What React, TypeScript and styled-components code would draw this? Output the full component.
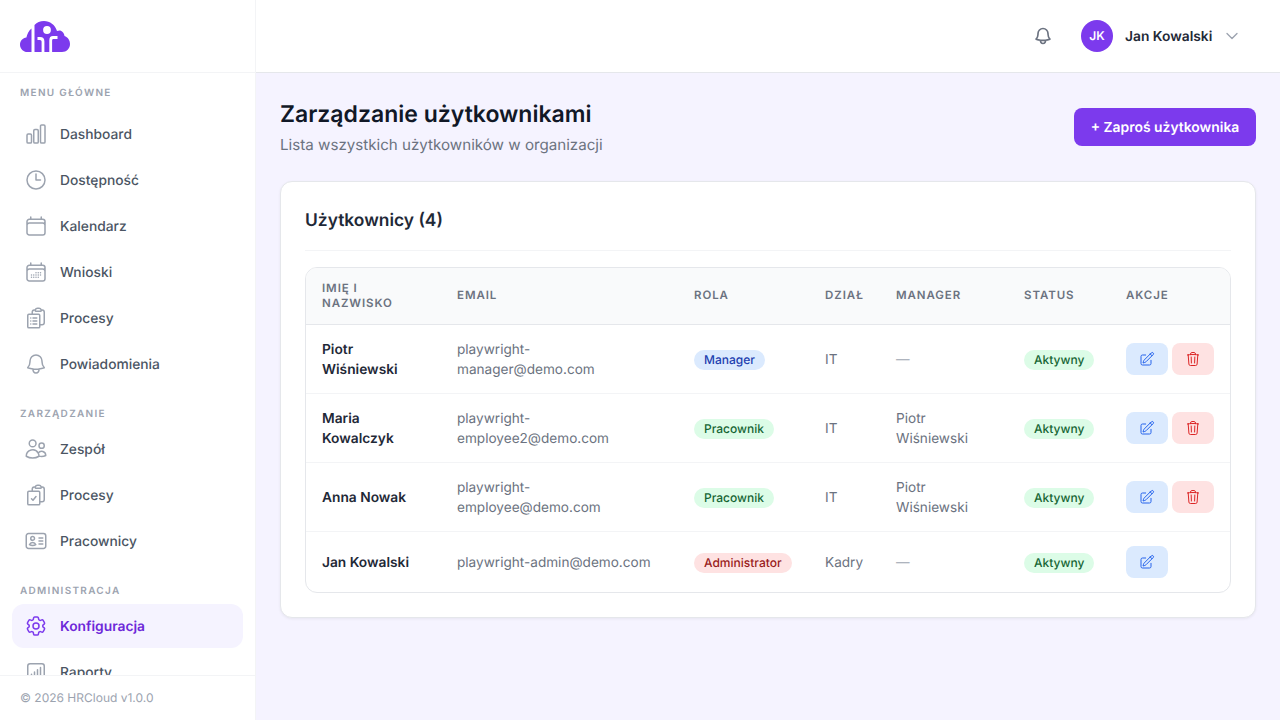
import React, { FC, ReactNode } from 'react';
import styled, { createGlobalStyle } from 'styled-components';
import {
  HiOutlineBell,
  HiOutlineCalendar,
  HiOutlineCalendarDays,
  HiOutlineChartBar,
  HiOutlineChartBarSquare,
  HiOutlineChevronDown,
  HiOutlineClipboardDocumentCheck,
  HiOutlineClipboardDocumentList,
  HiOutlineClock,
  HiOutlineCog6Tooth,
  HiOutlineIdentification,
  HiOutlinePencilSquare,
  HiOutlineTrash,
  HiOutlineUsers,
} from 'react-icons/hi2';

type RoleKind = 'manager' | 'employee' | 'admin';

interface IUser {
  name: string;
  email: string;
  role: string;
  kind: RoleKind;
  dept: string;
  manager: string;
  canDelete: boolean;
}

const USERS: IUser[] = [
  { name: 'Piotr Wiśniewski', email: 'playwright-manager@demo.com', role: 'Manager', kind: 'manager', dept: 'IT', manager: '—', canDelete: true },
  { name: 'Maria Kowalczyk', email: 'playwright-employee2@demo.com', role: 'Pracownik', kind: 'employee', dept: 'IT', manager: 'Piotr Wiśniewski', canDelete: true },
  { name: 'Anna Nowak', email: 'playwright-employee@demo.com', role: 'Pracownik', kind: 'employee', dept: 'IT', manager: 'Piotr Wiśniewski', canDelete: true },
  { name: 'Jan Kowalski', email: 'playwright-admin@demo.com', role: 'Administrator', kind: 'admin', dept: 'Kadry', manager: '—', canDelete: false },
];

const COLUMNS = [
  { title: 'Imię i nazwisko', width: 135 },
  { title: 'Email', width: 237 },
  { title: 'Rola', width: 131 },
  { title: 'Dział', width: 71 },
  { title: 'Manager', width: 128 },
  { title: 'Status', width: 102 },
  { title: 'Akcje', width: 120 },
];

const BADGE_COLORS = {
  manager: { bg: '#dbeafe', fg: '#1e40af' },
  employee: { bg: '#dcfce7', fg: '#166534' },
  admin: { bg: '#fee2e2', fg: '#991b1b' },
};

const GlobalStyle = createGlobalStyle`
  html, body {
    margin: 0;
    height: 100%;
    overflow: hidden;
  }
  body {
    font-family: Inter, 'Noto Sans', sans-serif;
    text-rendering: geometricPrecision;
    -webkit-font-smoothing: antialiased;
    background: #f5f3ff;
    color: #111827;
  }
  * { box-sizing: border-box; }
`;

const Shell = styled.div`
  display: flex;
  width: 1280px;
  height: 720px;
`;

const Sidebar = styled.aside`
  width: 256px;
  flex-shrink: 0;
  display: flex;
  flex-direction: column;
  background: #fff;
  border-right: 1px solid #f3f4f6;
`;

const LogoBar = styled.div`
  height: 73px;
  flex-shrink: 0;
  display: flex;
  align-items: center;
  padding: 0 20px 1px;
  border-bottom: 1px solid #f3f4f6;
`;

const Nav = styled.nav`
  flex: 1;
  min-height: 0;
  overflow: hidden;
  padding: 12px 12px 0;
`;

const SectionLabel = styled.div<{ $first?: boolean }>`
  height: 14px;
  line-height: 16px;
  padding-left: 8px;
  margin: ${(p) => (p.$first ? '0 0 13px' : '20px 0 7px')};
  font-size: 10px;
  font-weight: 600;
  letter-spacing: 1.3px;
  text-transform: uppercase;
  color: #9ca3af;
`;

const NavList = styled.div`
  display: flex;
  flex-direction: column;
  gap: 2px;
`;

const NavItem = styled.a<{ $active?: boolean }>`
  height: 44px;
  display: flex;
  align-items: center;
  gap: 12px;
  padding: 0 12px;
  border-radius: 12px;
  font-size: 13.8px;
  font-weight: ${(p) => (p.$active ? 600 : 500)};
  color: ${(p) => (p.$active ? '#6d28d9' : '#4b5563')};
  background: ${(p) => (p.$active ? '#f5f3ff' : 'transparent')};

  svg {
    width: 24px;
    height: 24px;
    flex-shrink: 0;
    color: ${(p) => (p.$active ? '#7c3aed' : '#9ca3af')};
  }
`;

const NavText = styled.span`
  padding-top: 2px;
`;

const SidebarFooter = styled.div`
  height: 45px;
  flex-shrink: 0;
  display: flex;
  align-items: center;
  padding: 0 20px 2px;
  border-top: 1px solid #f3f4f6;
  font-size: 12px;
  color: #9ca3af;
`;

const Main = styled.div`
  flex: 1;
  min-width: 0;
  display: flex;
  flex-direction: column;
`;

const TopBar = styled.header`
  height: 73px;
  flex-shrink: 0;
  display: flex;
  align-items: center;
  justify-content: flex-end;
  padding: 0 40px 1px 0;
  background: #fff;
  border-bottom: 1px solid #e5e7eb;
`;

const BellButton = styled.span`
  display: flex;
  margin-right: 28px;
  color: #6b7280;

  svg {
    width: 20px;
    height: 20px;
    stroke-width: 2;
  }
`;

const Avatar = styled.span`
  width: 32px;
  height: 32px;
  border-radius: 50%;
  display: flex;
  align-items: center;
  justify-content: center;
  margin-right: 12px;
  background: #7c3aed;
  color: #fff;
  font-size: 12px;
  font-weight: 600;
`;

const UserName = styled.span`
  padding-top: 2px;
  width: 87px;
  white-space: nowrap;
  font-size: 13.8px;
  font-weight: 600;
  color: #1f2937;
  margin-right: 12px;
`;

const Chevron = styled.span`
  display: flex;
  color: #9ca3af;

  svg {
    width: 16px;
    height: 16px;
    stroke-width: 2;
  }
`;

const Content = styled.main`
  flex: 1;
  padding: 24px;
`;

const PageHead = styled.div`
  display: flex;
  justify-content: space-between;
  align-items: center;
  margin-bottom: 24px;
`;

const PageTitle = styled.h1`
  margin: 0 0 4px;
  font-size: 23px;
  line-height: 34px;
  height: 32px;
  font-weight: 600;
  color: #111827;
`;

const PageSubtitle = styled.p`
  margin: 0;
  font-size: 15.15px;
  line-height: 24px;
  color: #6b7280;
`;

const PrimaryButton = styled.button`
  width: 182px;
  height: 38px;
  padding: 2px 0 0;
  border: 0;
  border-radius: 8px;
  background: #7c3aed;
  color: #fff;
  font-family: inherit;
  font-size: 13.9px;
  font-weight: 600;
  text-rendering: inherit;
`;

const Card = styled.section`
  background: #fff;
  border: 1px solid #e5e7eb;
  border-radius: 12px;
  box-shadow: 0 1px 3px rgba(0, 0, 0, 0.06);
  padding: 24px;
`;

const CardTitle = styled.h2`
  margin: 0 0 16px;
  padding-bottom: 16px;
  border-bottom: 1px solid #f3f4f6;
  height: 45px;
  font-size: 17.4px;
  line-height: 30px;
  font-weight: 600;
  color: #1f2937;
`;

const TableFrame = styled.div`
  width: 926px;
  border: 1px solid #e5e7eb;
  border-radius: 12px;
  overflow: hidden;
`;

const Table = styled.table`
  width: 100%;
  table-layout: fixed;
  border-collapse: collapse;
`;

const HeadCell = styled.th`
  height: 56px;
  padding: 12px 16px;
  background: #f9fafb;
  border-bottom: 1px solid #e5e7eb;
  text-align: left;
  font-size: 11.5px;
  line-height: 15px;
  font-weight: 600;
  letter-spacing: 0.92px;
  text-transform: uppercase;
  color: #6b7280;
`;

const Row = styled.tr`
  & + & td {
    border-top: 1px solid #f3f4f6;
  }
`;

const Cell = styled.td<{ $strong?: boolean; $muted?: boolean }>`
  padding: 14px 16px;
  font-size: ${(p) => (p.$strong ? '13.75px' : '13.6px')};
  line-height: 20px;
  font-weight: ${(p) => (p.$strong ? 600 : 400)};
  color: ${(p) => (p.$strong ? '#1f2937' : p.$muted ? '#9ca3af' : '#6b7280')};
`;

const CellText = styled.span`
  position: relative;
  top: 1px;
`;

const Badge = styled.span<{ $kind: RoleKind }>`
  display: inline-block;
  position: relative;
  top: 1px;
  padding: 2px 10px;
  border-radius: 999px;
  font-size: 12px;
  line-height: 16px;
  font-weight: 500;
  white-space: nowrap;
  vertical-align: middle;
  background: ${(p) => BADGE_COLORS[p.$kind].bg};
  color: ${(p) => BADGE_COLORS[p.$kind].fg};
`;

const Actions = styled.div`
  display: flex;
  gap: 4px;
`;

const IconButton = styled.button<{ $danger?: boolean }>`
  width: 42px;
  height: 32px;
  padding: 0;
  border: 0;
  border-radius: 8px;
  display: flex;
  align-items: center;
  justify-content: center;
  background: ${(p) => (p.$danger ? '#fee2e2' : '#dbeafe')};
  color: ${(p) => (p.$danger ? '#dc2626' : '#2563eb')};

  svg {
    width: 16px;
    height: 16px;
  }
`;

const Logo: FC = () => (
  <svg width="50" height="32" viewBox="0 -1 50 32" aria-label="HRCloud">
    <path
      d="M11.5 31H7.5C3.4 31 0 27.8 0 23.7 0 19.9 2.8 16.9 6.4 16.5 7.2 13.2 8.8 9.6 11.5 7.5Z"
      fill="#7c3aed"
    />
    <path
      d="M14.5 31V4C17 1.5 20 0 24 0 30 0 35 3.8 37 10 38 9.6 39 9.4 40.3 9.5 43 10.5 44.2 12.5 44.5 15 47.8 16 50 19.4 50 23 50 27.5 46.5 31 42 31Z"
      fill="#7c3aed"
    />
    <circle cx="27" cy="9" r="3.9" fill="#fff" />
    <path d="M17.5 17.5H20C22 17.5 23 18.5 23 20.5V31" fill="none" stroke="#fff" strokeWidth="2.8" />
    <path d="M37.5 16.5H33C31.5 16.5 30.7 17.5 30.7 19.5V31" fill="none" stroke="#fff" strokeWidth="2.8" />
  </svg>
);

const NavLink: FC<{ icon: ReactNode; label: string; active?: boolean }> = ({ icon, label, active }) => (
  <NavItem $active={active}>
    {icon}
    <NavText>{label}</NavText>
  </NavItem>
);

export default function App() {
  return (
    <Shell>
      <GlobalStyle />
      <Sidebar>
        <LogoBar>
          <Logo />
        </LogoBar>
        <Nav>
          <SectionLabel $first>Menu główne</SectionLabel>
          <NavList>
            <NavLink icon={<HiOutlineChartBar />} label="Dashboard" />
            <NavLink icon={<HiOutlineClock />} label="Dostępność" />
            <NavLink icon={<HiOutlineCalendar />} label="Kalendarz" />
            <NavLink icon={<HiOutlineCalendarDays />} label="Wnioski" />
            <NavLink icon={<HiOutlineClipboardDocumentList />} label="Procesy" />
            <NavLink icon={<HiOutlineBell />} label="Powiadomienia" />
          </NavList>
          <SectionLabel>Zarządzanie</SectionLabel>
          <NavList>
            <NavLink icon={<HiOutlineUsers />} label="Zespół" />
            <NavLink icon={<HiOutlineClipboardDocumentCheck />} label="Procesy" />
            <NavLink icon={<HiOutlineIdentification />} label="Pracownicy" />
          </NavList>
          <SectionLabel>Administracja</SectionLabel>
          <NavList>
            <NavLink icon={<HiOutlineCog6Tooth />} label="Konfiguracja" active />
            <NavLink icon={<HiOutlineChartBarSquare />} label="Raporty" />
          </NavList>
        </Nav>
        <SidebarFooter>© 2026 HRCloud v1.0.0</SidebarFooter>
      </Sidebar>
      <Main>
        <TopBar>
          <BellButton>
            <HiOutlineBell />
          </BellButton>
          <Avatar>JK</Avatar>
          <UserName>Jan Kowalski</UserName>
          <Chevron>
            <HiOutlineChevronDown />
          </Chevron>
        </TopBar>
        <Content>
          <PageHead>
            <div>
              <PageTitle>Zarządzanie użytkownikami</PageTitle>
              <PageSubtitle>Lista wszystkich użytkowników w organizacji</PageSubtitle>
            </div>
            <PrimaryButton>+ Zaproś użytkownika</PrimaryButton>
          </PageHead>
          <Card>
            <CardTitle>Użytkownicy (4)</CardTitle>
            <TableFrame>
              <Table>
                <colgroup>
                  {COLUMNS.map((col) => (
                    <col key={col.title} width={col.width} />
                  ))}
                </colgroup>
                <thead>
                  <tr>
                    {COLUMNS.map((col) => (
                      <HeadCell key={col.title}>{col.title}</HeadCell>
                    ))}
                  </tr>
                </thead>
                <tbody>
                  {USERS.map((user) => (
                    <Row key={user.email}>
                      <Cell $strong>
                        <CellText>{user.name}</CellText>
                      </Cell>
                      <Cell>
                        <CellText>{user.email}</CellText>
                      </Cell>
                      <Cell>
                        <Badge $kind={user.kind}>{user.role}</Badge>
                      </Cell>
                      <Cell>
                        <CellText>{user.dept}</CellText>
                      </Cell>
                      <Cell $muted={user.manager === '—'}>
                        <CellText>{user.manager}</CellText>
                      </Cell>
                      <Cell>
                        <Badge $kind="employee">Aktywny</Badge>
                      </Cell>
                      <Cell>
                        <Actions>
                          <IconButton>
                            <HiOutlinePencilSquare />
                          </IconButton>
                          {user.canDelete && (
                            <IconButton $danger>
                              <HiOutlineTrash />
                            </IconButton>
                          )}
                        </Actions>
                      </Cell>
                    </Row>
                  ))}
                </tbody>
              </Table>
            </TableFrame>
          </Card>
        </Content>
      </Main>
    </Shell>
  );
}
